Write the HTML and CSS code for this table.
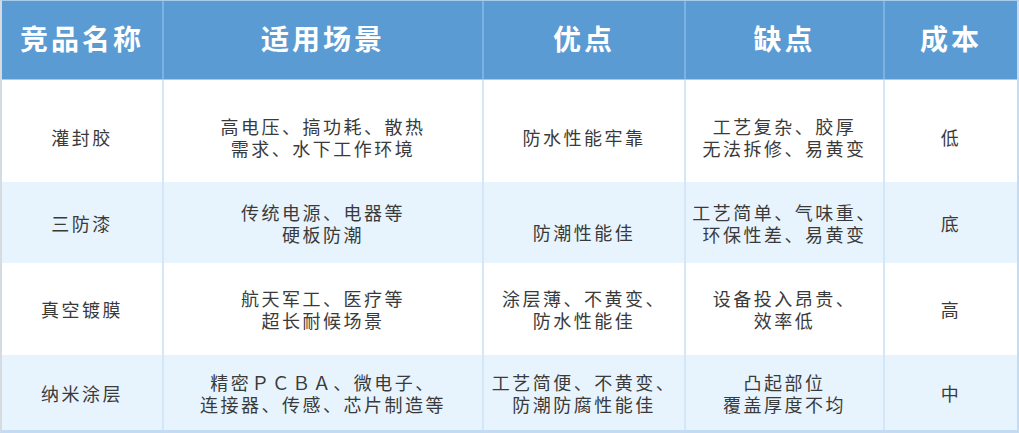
FILE: index.html
```html
<!DOCTYPE html>
<html lang="zh-CN">
<head>
<meta charset="utf-8">
<title>竞品对比</title>
<link rel="stylesheet" href="styles.css">
</head>
<body>
<div class="table">
  <div class="row head">
    <div class="cell">竞品名称</div>
    <div class="cell">适用场景</div>
    <div class="cell">优点</div>
    <div class="cell">缺点</div>
    <div class="cell">成本</div>
  </div>
  <div class="row r1">
    <div class="cell">灌封胶</div>
    <div class="cell">高电压、搞功耗、散热<br>需求、水下工作环境</div>
    <div class="cell">防水性能牢靠</div>
    <div class="cell">工艺复杂、胶厚<br>无法拆修、易黄变</div>
    <div class="cell">低</div>
  </div>
  <div class="row r2 alt">
    <div class="cell">三防漆</div>
    <div class="cell">传统电源、电器等<br>硬板防潮</div>
    <div class="cell low">防潮性能佳</div>
    <div class="cell">工艺简单、气味重、<br>环保性差、易黄变</div>
    <div class="cell">底</div>
  </div>
  <div class="row r3">
    <div class="cell">真空镀膜</div>
    <div class="cell">航天军工、医疗等<br>超长耐候场景</div>
    <div class="cell">涂层薄、不黄变、<br>防水性能佳</div>
    <div class="cell">设备投入昂贵、<br>效率低</div>
    <div class="cell">高</div>
  </div>
  <div class="row r4 alt">
    <div class="cell">纳米涂层</div>
    <div class="cell">精密ＰＣＢＡ、微电子、<br>连接器、传感、芯片制造等</div>
    <div class="cell">工艺简便、不黄变、<br>防潮防腐性能佳</div>
    <div class="cell">凸起部位<br>覆盖厚度不均</div>
    <div class="cell">中</div>
  </div>
</div>
</body>
</html>
```

FILE: styles.css
```css
html, body {
  margin: 0;
  padding: 0;
  background: #ffffff;
}

.table {
  width: 1019px;
  height: 433px;
  box-sizing: border-box;
  border-left: 2px solid #d5dbe1;
  border-top: 1px solid #a9cbea;
  border-right: 2px solid #c3dcf4;
  border-bottom: 3px solid #c3dcf4;
  display: flex;
  flex-direction: column;
  font-family: "Noto Sans CJK SC", "Noto Sans", sans-serif;
  color: #3a3a3a;
}

.row {
  display: grid;
  grid-template-columns: 162px 320px 202px 199px 1fr;
  background: #ffffff;
}

.row.alt {
  background: #e8f4fd;
}

.cell {
  display: flex;
  align-items: center;
  justify-content: center;
  text-align: center;
  font-size: 18px;
  line-height: 22px;
  letter-spacing: 2.5px;
  border-right: 2px solid #d3e7f9;
  box-sizing: border-box;
}

.cell:last-child {
  border-right: none;
}

.head {
  height: 79px;
  background: #5a9bd3;
  border-bottom: 1px solid #a6cdef;
  box-sizing: border-box;
}

.head .cell {
  color: #ffffff;
  font-size: 28px;
  font-weight: 700;
  letter-spacing: 3px;
  border-right-color: #7cb2e2;
  padding-bottom: 4px;
}

.r1 { height: 102px; }
.r1 .cell { padding-top: 12px; }

.r2 { height: 81px; }
.r2 .cell.low { padding-top: 18px; }

.r3 { height: 92px; }

.r4 { height: 75px; }
```
